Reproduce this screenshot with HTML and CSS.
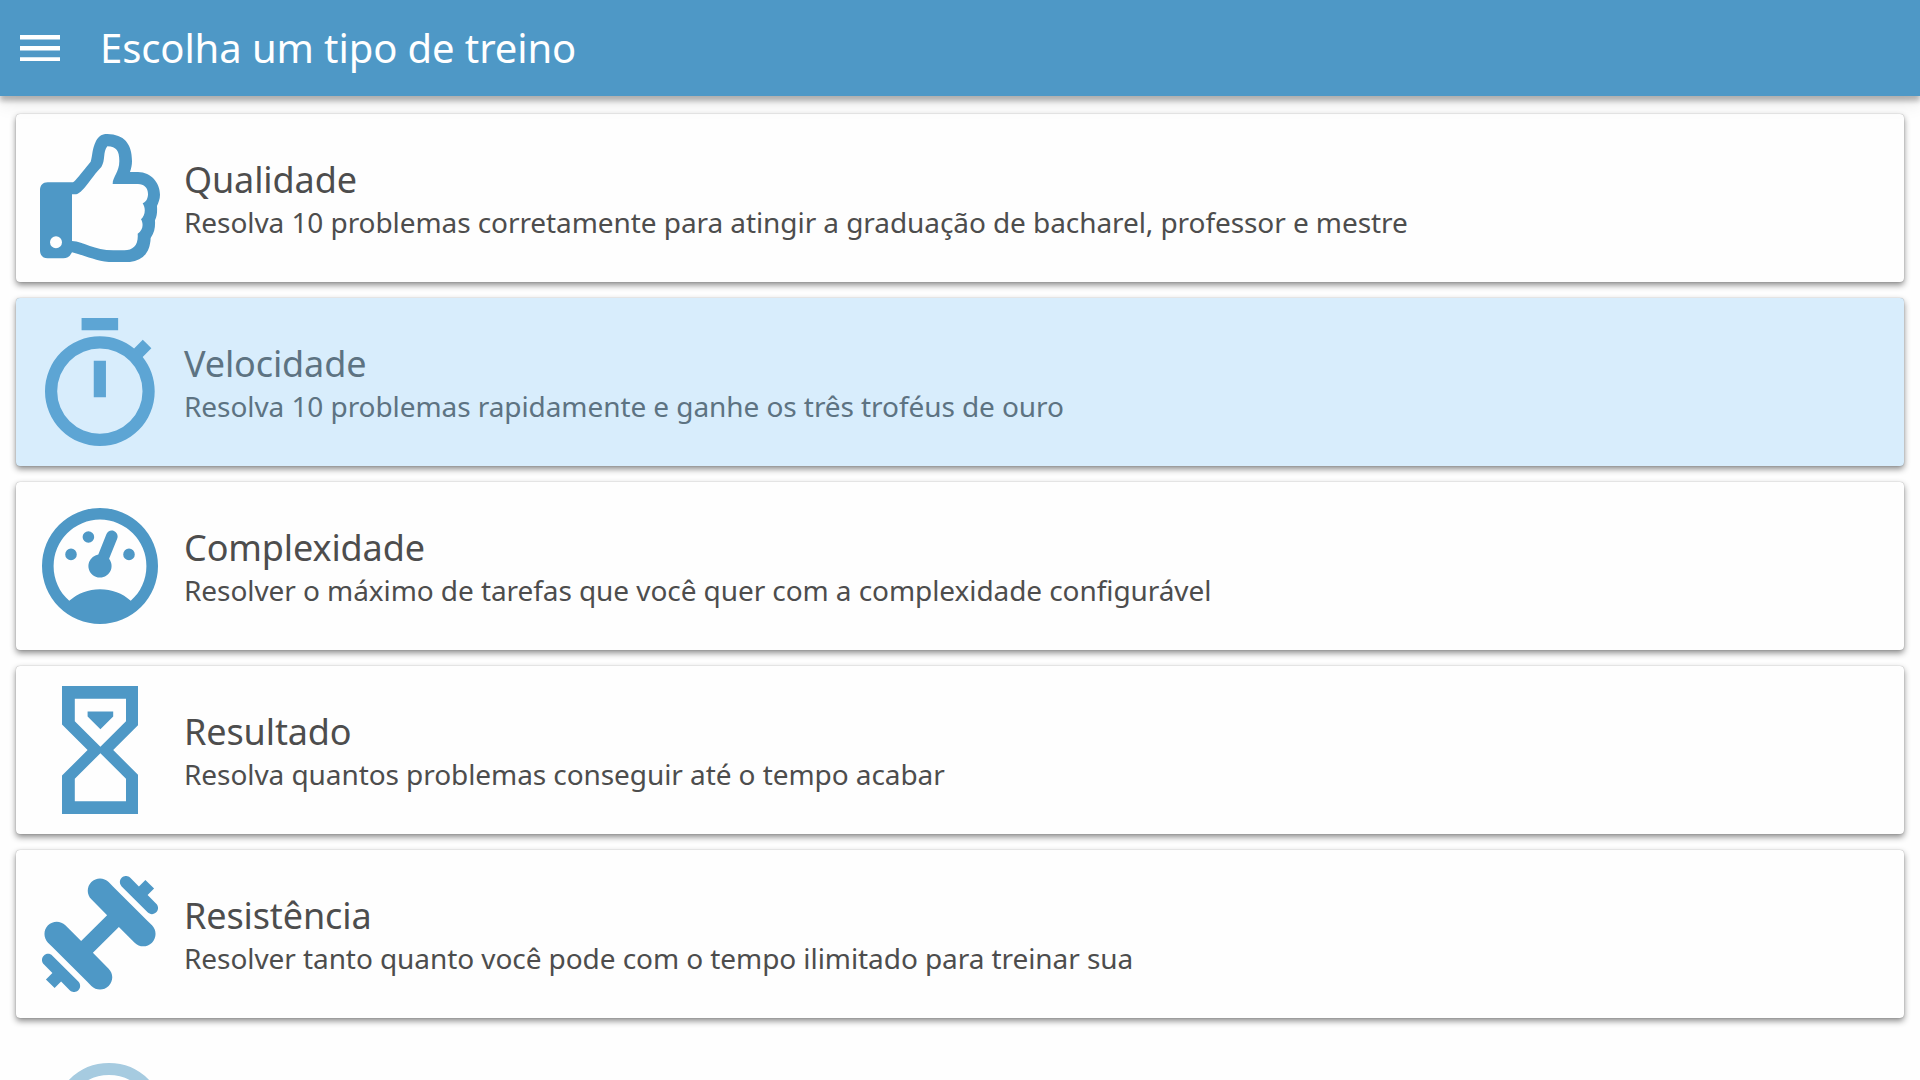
FILE: index.html
```html
<!DOCTYPE html>
<html lang="pt">
<head>
  <meta charset="UTF-8">
  <meta name="viewport" content="width=device-width, initial-scale=1.0">
  <title>Escolha um tipo de treino</title>
  <link rel="stylesheet" href="styles.css">
</head>
<body>
  <header class="toolbar">
    <button class="menu-button" aria-label="Menu">
      <svg viewBox="3 6 18 12"><path d="M3 6h18v2H3zM3 11h18v2H3zM3 16h18v2H3z"/></svg>
    </button>
    <h1>Escolha um tipo de treino</h1>
  </header>

  <main class="training-list">
    <section class="card">
      <div class="icon">
        <svg class="thumb" viewBox="120 101 360 386">
          <path fill-rule="evenodd" d="M143 246H219C228 240 238 225 272 184C278 164 276 146 288 122C298 105 308 101 322 101C372 102 396 130 396 182C396 194 394 204 390 215H414C454 216 480 248 480 283C480 296 475 307 471 317C472 334 471 347 465 360C466 380 464 396 452 413C450 462 424 486 373 486H340C291 484 253 465 216 456C210 468 202 474 190 474H143C128 474 120 464 120 450V270C120 255 128 246 143 246ZM216 282V422C252 424 282 450 340 450H373C400 450 416 434 413 400C428 390 432 372 423 357C436 345 438 325 428 309C441 304 444 290 444 281C444 262 432 251 414 251H338C338 229 358 216 358 182C358 152 350 139 322 138C308 155 317 180 304 200C270 235 248 282 225 282ZM168 408A18 18 0 1 0 168 444A18 18 0 1 0 168 408Z"/>
        </svg>
      </div>
      <div class="info">
        <h2>Qualidade</h2>
        <p>Resolva 10 problemas corretamente para atingir a graduação de bacharel, professor e mestre</p>
      </div>
    </section>

    <section class="card selected">
      <div class="icon">
        <svg class="timer" viewBox="3 1 18 21">
          <path d="M12,20A7,7 0 0,1 5,13A7,7 0 0,1 12,6A7,7 0 0,1 19,13A7,7 0 0,1 12,20M19.03,7.39L20.45,5.97C20,5.46 19.55,5 19.04,4.56L17.62,6C16.07,4.74 14.12,4 12,4A9,9 0 0,0 3,13A9,9 0 0,0 12,22C17,22 21,17.97 21,13C21,10.88 20.26,8.93 19.03,7.39M11,14H13V8H11M15,1H9V3H15V1Z"/>
        </svg>
      </div>
      <div class="info">
        <h2>Velocidade</h2>
        <p>Resolva 10 problemas rapidamente e ganhe os três troféus de ouro</p>
      </div>
    </section>

    <section class="card">
      <div class="icon">
        <svg class="gauge" viewBox="2 2 20 20">
          <path d="M12,2A10,10 0 0,0 2,12A10,10 0 0,0 12,22A10,10 0 0,0 22,12A10,10 0 0,0 12,2M12,4A8,8 0 0,1 20,12C20,14.4 19,16.5 17.3,18C15.9,16.7 14,16 12,16C10,16 8.2,16.7 6.7,18C5,16.5 4,14.4 4,12A8,8 0 0,1 12,4M14,5.89C13.62,5.9 13.26,6.15 13.1,6.54L11.81,9.77L11.71,10C11,10.13 10.41,10.6 10.14,11.26C9.73,12.29 10.23,13.45 11.26,13.86C12.29,14.27 13.45,13.77 13.86,12.74C14.12,12.08 14,11.32 13.57,10.76L13.67,10.5L14.96,7.29L14.97,7.26C15.17,6.75 14.92,6.17 14.41,5.96C14.28,5.91 14.15,5.89 14,5.89M10,6A1,1 0 0,0 9,7A1,1 0 0,0 10,8A1,1 0 0,0 11,7A1,1 0 0,0 10,6M7,9A1,1 0 0,0 6,10A1,1 0 0,0 7,11A1,1 0 0,0 8,10A1,1 0 0,0 7,9M17,9A1,1 0 0,0 16,10A1,1 0 0,0 17,11A1,1 0 0,0 18,10A1,1 0 0,0 17,9Z"/>
        </svg>
      </div>
      <div class="info">
        <h2>Complexidade</h2>
        <p>Resolver o máximo de tarefas que você quer com a complexidade configurável</p>
      </div>
    </section>

    <section class="card">
      <div class="icon">
        <svg class="hourglass" viewBox="6 2 12 20">
          <path d="M6,2V8L10,12L6,16V22H18V16L14,12L18,8V2H6M16,16.5V20H8V16.5L12,12.5L16,16.5M12,11.5L8,7.5V4H16V7.5L12,11.5M10,6V6.75L12,8.75L14,6.75V6H10Z"/>
        </svg>
      </div>
      <div class="info">
        <h2>Resultado</h2>
        <p>Resolva quantos problemas conseguir até o tempo acabar</p>
      </div>
    </section>

    <section class="card">
      <div class="icon">
        <svg class="dumbbell" viewBox="2.52 2.52 18.96 18.96">
          <path d="M4.22,14.12L3.5,13.41C2.73,12.63 2.73,11.37 3.5,10.59C4.3,9.8 5.56,9.8 6.34,10.59L8.92,13.16L13.16,8.92L10.59,6.34C9.8,5.56 9.8,4.3 10.59,3.5C11.37,2.73 12.63,2.73 13.41,3.5L14.12,4.22L19.78,9.88L20.5,10.59C21.27,11.37 21.27,12.63 20.5,13.41C19.7,14.2 18.44,14.2 17.66,13.41L15.08,10.84L10.84,15.08L13.41,17.66C14.2,18.44 14.2,19.7 13.41,20.5C12.63,21.27 11.37,21.27 10.59,20.5L9.88,19.78L4.22,14.12M3.16,19.42L4.22,18.36L2.81,16.95C2.42,16.56 2.42,15.93 2.81,15.54C3.2,15.15 3.83,15.15 4.22,15.54L8.46,19.78C8.85,20.17 8.85,20.8 8.46,21.19C8.07,21.58 7.44,21.58 7.05,21.19L5.64,19.78L4.58,20.84L3.16,19.42M19.42,3.16L20.84,4.58L19.78,5.64L21.19,7.05C21.58,7.44 21.58,8.07 21.19,8.46C20.8,8.85 20.17,8.85 19.78,8.46L15.54,4.22C15.15,3.83 15.15,3.2 15.54,2.81C15.93,2.42 16.56,2.42 16.95,2.81L18.36,4.22L19.42,3.16Z"/>
        </svg>
      </div>
      <div class="info">
        <h2>Resistência</h2>
        <p>Resolver tanto quanto você pode com o tempo ilimitado para treinar sua</p>
      </div>
    </section>

    <!-- next item, still fading in at the bottom edge -->
    <section class="card entering">
      <svg class="ring" viewBox="0 0 112 112"><circle cx="56" cy="56" r="50"/></svg>
    </section>
  </main>
</body>
</html>
```

FILE: styles.css
```css
* {
  box-sizing: border-box;
}
body {
  display: flex;
  flex-direction: column;
  margin: 0;
  height: 1080px;
  overflow: hidden;
  background: #fefefe;
  color: #4d4d4d;
  font-family: "Noto Sans", sans-serif;
}
h1, h2, p {
  margin: 0;
  font-weight: 400;
}
svg {
  display: block;
  fill: currentColor;
}
.toolbar {
  position: relative;
  display: flex;
  flex-shrink: 0;
  align-items: center;
  gap: 40px;
  height: 96px;
  padding: 0 20px;
  background: #4e98c6;
  color: #fff;
  box-shadow: 0 5px 5px rgba(0,0,0,0.26), 0 6px 18px rgba(0,0,0,0.1);
}
.menu-button {
  padding: 0;
  border: 0;
  background: none;
  color: inherit;
}
.menu-button svg {
  width: 40px;
}
h1 {
  padding-bottom: 2px;
  font-size: 40px;
  letter-spacing: -0.1px;
}
.training-list {
  display: flex;
  flex: 1;
  flex-direction: column;
  gap: 16px;
  min-height: 0;
  padding: 18px 16px 0;
  overflow: hidden;
}
.card {
  display: flex;
  flex-shrink: 0;
  align-items: center;
  gap: 20px;
  height: 168px;
  padding: 0 20px;
  border-radius: 4px;
  background: #fefefe;
  box-shadow: 0 0 1px rgba(0,0,0,0.4), 0 3px 6px rgba(0,0,0,0.46);
}
.card.selected {
  background: #d8edfc;
  color: #5d7382;
}
.icon {
  display: flex;
  justify-content: center;
  width: 128px;
  color: #4e98c6;
}
.selected .icon {
  color: #5da5d4;
}
.thumb {
  width: 120px;
}
.timer {
  height: 128px;
}
.gauge,
.dumbbell {
  width: 116px;
}
.hourglass {
  height: 128px;
}
.info h2 {
  font-size: 36px;
  line-height: 48px;
  letter-spacing: -0.12px;
}
.info p {
  font-size: 28px;
  line-height: 36px;
  letter-spacing: -0.075px;
}
.card.entering {
  align-items: flex-start;
  padding: 29px 37px;
  background: none;
  box-shadow: none;
}
.ring {
  width: 112px;
  fill: none;
  stroke: #a6cbe0;
  stroke-width: 12;
}
```
